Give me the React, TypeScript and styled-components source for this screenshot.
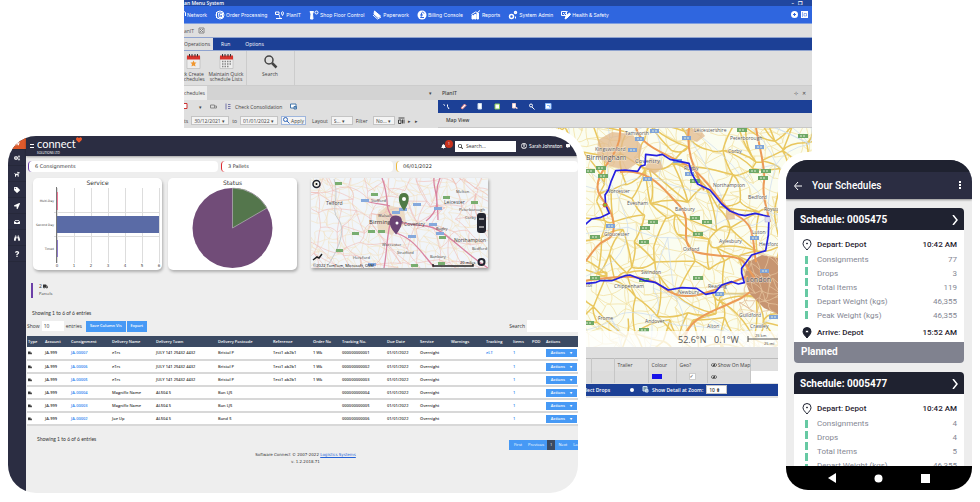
import React from "react";
import styled, { createGlobalStyle } from "styled-components";
import {
  FaHome, FaCogs, FaDog, FaTag, FaLocationArrow, FaInbox, FaBinoculars, FaQuestion, FaTruck,
  FaSearch, FaBell, FaRegUserCircle, FaCommentAlt, FaHeart, FaSignOutAlt, FaRegEye,
} from "react-icons/fa";

const Global = createGlobalStyle`
  *, *::before, *::after { box-sizing: border-box; }
  html, body { margin: 0; background: #fff; }
  button, input, select { font: inherit; color: inherit; margin: 0; padding: 0; border: 0; border-radius: 0; background: none; }
  select { appearance: none; }
  a { color: inherit; text-decoration: none; }
  svg { display: block; flex: none; }
  h1, h2, p, ul, dl, dd { margin: 0; padding: 0; }
`;

const Stage = styled.main`
  position: relative;
  min-height: 100vh;
  overflow: hidden;
  background: #fff;
  white-space: nowrap;
`;

/* ---------- planning desktop ---------- */

const Desktop = styled.section`
  position: absolute;
  top: 0;
  left: 184px;
  right: 168px;
  background: #dfdfdf;
  color: #444;
  font: 5px/8px "Open Sans", sans-serif;
  overflow: hidden;
`;
const TitleBar = styled.header`
  display: flex;
  align-items: center;
  justify-content: space-between;
  height: 6px;
  padding-right: 10px;
  background: #21479f;
  color: #fff;
  font-weight: 600;
  line-height: 4px;
  h1 { font: inherit; line-height: 4px; }
`;
const MainNav = styled.nav`
  display: flex;
  align-items: center;
  gap: 8px;
  height: 18px;
  padding-right: 4px;
  background: #2f66df;
  border-bottom: 1px solid #7f9fe0;
  color: #fff;
  font: 5px/8px Inter, sans-serif;
`;
const NavLink = styled.a`
  display: flex;
  align-items: center;
  gap: 1px;
`;
const NavEnd = styled.span`
  display: flex;
  gap: 3px;
  margin-left: auto;
`;
const DocTabs = styled.div`
  display: flex;
  align-items: center;
  gap: 4px;
  height: 13px;
  color: #555;
`;
const RibbonTabs = styled.div`
  display: flex;
  height: 14px;
  background: #1c4096;
  border: 1px solid #8fa3cf;
  border-width: 1px 0;
`;
const RibbonTab = styled.button<{ $active?: boolean }>`
  padding: 0 ${(p) => (p.$active ? 3 : 7)}px 0 ${(p) => (p.$active ? 0 : 8)}px;
  background: ${(p) => (p.$active ? "#dfdfdf" : "transparent")};
  color: ${(p) => (p.$active ? "#444" : "#fff")};
`;
const Ribbon = styled.div`
  display: flex;
  height: 35px;
  border-bottom: 1px solid #ccc;
`;
const RibbonGroup = styled.div`
  display: flex;
  gap: 5px;
  padding: 3px 1px 0 0;
  border-right: 1px solid #ccc;
`;
const RibbonButton = styled.button<{ $w: number }>`
  display: flex;
  flex-direction: column;
  align-items: center;
  gap: 3px;
  width: ${(p) => p.$w}px;
  line-height: 5px;
  white-space: pre;
`;
const Panes = styled.div`
  display: grid;
  grid-template-columns: minmax(0, 254fr) minmax(0, 374fr);
`;
const Pane = styled.div`
  min-width: 0;
`;
const PaneHead = styled.div`
  display: flex;
  align-items: center;
  justify-content: space-between;
  height: 14px;
  padding: 0 6px 0 0;
  background: #d3d3d3;
  color: #444;
`;
const PaneTab = styled.button<{ $plain?: boolean }>`
  height: 14px;
  padding: 0 2px 0 ${(p) => (p.$plain ? 4 : 0)}px;
  background: ${(p) => (p.$plain ? "transparent" : "#ececec")};
  font-weight: ${(p) => (p.$plain ? 600 : 400)};
`;
const Tools = styled.div<{ $blue?: boolean }>`
  display: flex;
  align-items: center;
  gap: ${(p) => (p.$blue ? 10 : 8)}px;
  height: 13px;
  padding-left: ${(p) => (p.$blue ? 5 : 0)}px;
  background: ${(p) => (p.$blue ? "#1c4096" : "#dfdfdf")};
  button { display: flex; align-items: center; gap: 3px; }
`;
const Filters = styled.form`
  display: flex;
  align-items: center;
  gap: 3px;
  height: 15px;
  label { display: flex; align-items: center; gap: 3px; }
`;
const Box = styled.input<{ $w: number }>`
  width: ${(p) => p.$w}px;
  height: 9px;
  padding: 0 2px;
  border: 1px solid #c4c4c4;
  background: #f4f4f4;
`;
const Pick = styled.select`
  width: 22px;
  height: 9px;
  padding: 0 2px;
  border: 1px solid #c4c4c4;
  background: #f4f4f4;
`;
const Apply = styled.button`
  display: flex;
  align-items: center;
  gap: 1px;
  height: 9px;
  margin-right: 3px;
  padding: 0 1px;
  border: 1px solid #9fb6dc;
  background: #f4f4f4;
`;
const MapTitle = styled.h2`
  height: 15px;
  padding-left: 8px;
  border-bottom: 1px solid #c8c8c8;
  font: 600 5px/15px "Open Sans", sans-serif;
`;
const MapDrawing = styled.svg`
  width: 100%;
  height: auto;
`;
const DropTable = styled.table`
  width: 100%;
  margin-top: 11px;
  border-collapse: collapse;
  table-layout: fixed;
  border-top: 1px solid #bbb;
  th, td { height: 12px; padding: 0 3px; border-right: 1px solid #c6c6c6; font-weight: 400; text-align: left; }
  td { background: #dcdcdc; }
  td:last-child { background: #fff; }
  svg { display: inline-block; vertical-align: middle; }
`;
const Col = styled.col<{ $w: number }>`
  width: ${(p) => p.$w}px;
`;
const Swatch = styled.span`
  display: block;
  width: 10px;
  height: 5px;
  background: #1712e8;
`;
const Tick = styled.input`
  appearance: none;
  display: block;
  width: 7px;
  height: 7px;
  margin-left: 9px;
  background: #fff;
  border: 1px solid #ccc;
  &:checked::after { content: "✓"; display: block; font: 5px/5px "DejaVu Sans", sans-serif; }
`;
const ZoomBar = styled.div`
  display: flex;
  align-items: center;
  gap: 3px;
  height: 12px;
  margin: 1px 0 2px;
  padding-left: 142px;
  background: #1c4096;
  color: #fff;
  font-weight: 600;
  label { display: flex; align-items: center; gap: 3px; }
  input { color: #444; background: #fff; }
`;

const ROADS_SEED = 7;
function roadWeb(x0: number, y0: number, w: number, h: number, step: number, seed: number) {
  let s = seed;
  const rnd = () => (s = (s * 16807) % 2147483647) / 2147483647;
  const cols = Math.ceil(w / step) + 2;
  const rows = Math.ceil(h / step) + 2;
  const at: number[][][] = [];
  for (let r = 0; r < rows; r++) {
    at.push([]);
    for (let c = 0; c < cols; c++)
      at[r].push([x0 + (c - 0.5 + (rnd() - 0.5) * 1.1) * step, y0 + (r - 0.5 + (rnd() - 0.5) * 1.1) * step]);
  }
  let d = "";
  const link = (a: number[], b: number[]) => {
    const mx = (a[0] + b[0]) / 2 + (rnd() - 0.5) * step * 0.6;
    const my = (a[1] + b[1]) / 2 + (rnd() - 0.5) * step * 0.6;
    d += `M${a[0].toFixed(1)} ${a[1].toFixed(1)}Q${mx.toFixed(1)} ${my.toFixed(1)} ${b[0].toFixed(1)} ${b[1].toFixed(1)}`;
  };
  for (let r = 0; r < rows; r++)
    for (let c = 0; c < cols; c++) {
      if (c + 1 < cols && rnd() > 0.15) link(at[r][c], at[r][c + 1]);
      if (r + 1 < rows && rnd() > 0.15) link(at[r][c], at[r + 1][c]);
      if (r + 1 < rows && c + 1 < cols && rnd() > 0.65) link(at[r][c], at[r + 1][c + 1]);
    }
  return d;
}

type Place = [number, number, string, number?];
const TOWNS: Place[] = [
  [586, 160, "Birmingham", 7], [635, 163, "Coventry", 6], [625, 135, "Tamworth"], [694, 132, "Leicestershire"],
  [730, 140, "Peterborough"], [728, 153, "Corby"], [595, 151, "Kingswinford"], [684, 170, "Rugby"],
  [606, 193, "Worcester"], [713, 187, "Northampton"], [748, 199, "Bedford"], [627, 205, "Evesham"],
  [675, 211, "Banbury"], [764, 211, "Royston"], [604, 236, "Gloucester"], [752, 234, "Luton"],
  [719, 243, "Aylesbury"], [683, 251, "Oxford"], [759, 246, "Hertford"], [641, 274, "Swindon"],
  [614, 288, "Chippenham"], [586, 287, "tol"], [708, 288, "Reading"], [746, 282, "London", 7],
  [678, 294, "Newbury"], [739, 317, "Guildford"], [645, 323, "Andover"], [598, 320, "Frome"],
  [707, 328, "Alton"], [750, 328, "Crawley"],
];
const GREEN_TAGS: [number, number][] = [
  [601, 168], [603, 176], [590, 171], [754, 171], [766, 171], [763, 178], [695, 181], [695, 218], [707, 222],
  [653, 222], [645, 228], [595, 237], [644, 242], [698, 234], [742, 130], [803, 136], [595, 278], [698, 278],
  [644, 280], [589, 323], [644, 330],
];
const BLUE_TAGS: [number, number][] = [
  [655, 131], [640, 139], [633, 150], [687, 138], [760, 147], [678, 161], [648, 179], [690, 174], [611, 226],
  [765, 271], [720, 294], [774, 317], [755, 238],
];

function RouteMap() {
  return (
    <MapDrawing viewBox="438 128 374 219" role="img" aria-label="Route map" fontFamily="Open Sans, sans-serif">
      <rect x="438" y="128" width="374" height="219" fill="#fbfdf0" />
      <g fill="none">
        <path d={roadWeb(540, 120, 280, 230, 11, 91)} stroke="#f3e2a6" strokeWidth="0.8" />
        <path d={roadWeb(540, 120, 280, 230, 22, ROADS_SEED)} stroke="#e9c75f" strokeWidth="1.5" />
        <path d={roadWeb(540, 120, 280, 230, 45, 23)} stroke="#cbdbee" strokeWidth="0.7" />
      </g>
      <g fill="#e2b98c" opacity="0.75">
        <path d="M598 140l14-8 20 2 10 12-3 16-12 8-18-4-12-10z" />
        <path d="M650 158l10 2 3 8-9 6-9-6z" />
        <path d="M686 130l13-2 6 8-8 6-10-4z" />
        <path d="M726 208l8 2 1 9-9 1z" />
      </g>
      <path d="M748 262l14-7 16 3 34 6v50l-26 4-22-10-14-14-6-16z" fill="#c79571" />
      <path d={roadWeb(748, 262, 60, 44, 8, 55)} fill="none" stroke="#e3c19c" strokeWidth="0.8" />
      <g fill="none" stroke="#ec9b58" strokeWidth="2">
        <path d="M560 290C590 262 592 246 606 240S612 212 606 204 594 190 600 176 622 150 620 128" />
        <path d="M620 172C650 168 664 190 676 202S686 218 686 236 700 254 724 256 742 262 756 280" />
        <path d="M756 128C760 150 766 170 764 182S766 206 770 222" />
        <path d="M636 128C642 150 676 156 694 170S720 206 738 216 752 240 756 262" />
        <path d="M684 340C688 320 706 314 724 306S742 298 750 292" />
        <path d="M560 284C600 280 640 268 664 288S720 286 748 276" />
        <path d="M689 128C686 150 692 164 704 190" />
      </g>
      <g fill="#6fa866">
        {GREEN_TAGS.map(([x, y]) => <rect key={`${x}-${y}`} x={x - 5} y={y - 2} width="10" height="4" />)}
      </g>
      <g fill="#7fa4da">
        {BLUE_TAGS.map(([x, y]) => <rect key={`${x}-${y}`} x={x - 5} y={y - 2} width="9" height="4" />)}
      </g>
      <g stroke="#e5efd9" strokeDasharray="2 1">
        {[...GREEN_TAGS, ...BLUE_TAGS].map(([x, y]) => <path key={`${x}-${y}`} d={`M${x - 3} ${y}h6`} />)}
      </g>
      <g fill="#555" stroke="#fff" strokeWidth="1" strokeOpacity="0.6" paintOrder="stroke">
        {TOWNS.map(([x, y, name, size]) => <text key={name} x={x} y={y} fontSize={size ?? 5}>{name}</text>)}
      </g>
      <g transform="translate(575 120) scale(.33333)" fill="none" stroke="#2520e0" strokeWidth="5" strokeLinejoin="round">
        <path d="M0 330L33 312 50 297 75 293 103 280 92 255 90 225 100 210 108 185 122 152 150 150 188 154 198 138 210 135 212 103 245 107 262 103 285 118 342 130 350 160 368 192 405 210 440 252 465 273 490 283 510 287 540 280 582 290 580 345 572 392 530 405 500 445 500 460 508 488 490 492 470 485 440 495 420 517 392 523 365 505 320 503 280 510 240 487 210 482 165 465 150 467 110 482 75 482 60 488 0 493" />
      </g>
      <circle cx="605" cy="205" r="2" fill="#7ac52b" stroke="#e2562b" />
      <rect x="765" y="217" width="5" height="5" fill="#dcdcf2" stroke="#aaaad0" strokeWidth="0.5" />
      <rect x="438" y="331" width="374" height="16" fill="#fff" opacity="0.75" />
      <text x="678" y="343" fontSize="9" fill="#555">52.6°N</text>
      <text x="714" y="343" fontSize="9" fill="#555">0.1°W</text>
      <path d="M748 336v6M748 339h50" stroke="#555" fill="none" />
      <text x="755" y="337" fontSize="4" fill="#444">25 km</text>
      <text x="764" y="345" fontSize="4" fill="#444">25 mi</text>
    </MapDrawing>
  );
}

const Line = ({ d, children }: { d?: string; children?: React.ReactNode }) => (
  <svg width="10" height="10" viewBox="0 0 20 20" fill="none" stroke="#fff" strokeWidth="2">
    {d && <path d={d} />}
    {children}
  </svg>
);
const OrderIcon = () => <Line><circle cx="10" cy="10" r="8" /><path d="M3 4v12M7 6h8v9H8zM10 9h4M10 12h3" /></Line>;
const PinRouteIcon = () => <Line d="M1 4h7v5H1zM2 17h12M5 9c8 0 0 8 9 8M15 11c-7-10 7-10 0 0z" />;
const ShopIcon = () => <Line><path d="M2 3h7l-2 5 1 10H3l1-10z" fill="#fff" /><circle cx="15" cy="5" r="3" /></Line>;
const PaperIcon = () => <Line><path d="M5 2l12 10-5 3L4 8z" fill="#fff" /><path d="M2 10l9 8 7-4" /></Line>;
const PoundIcon = () => (
  <svg width="10" height="10" viewBox="0 0 20 20"><circle cx="10" cy="10" r="9" fill="#fff" /><path d="M14 7c-1-4-6-3-5 1v3c0 2-1 3-2 4h7M6 10h6" fill="none" stroke="#2f66df" strokeWidth="2" /></svg>
);
const ReportIcon = () => <Line><path d="M2 18V11h3v7zM7 18V9h3v9zM12 18V6h3v12z" fill="#fff" /><path d="M1 9L9 4l4 1 5-4" /></Line>;
const GearIcon = () => <Line><circle cx="7" cy="13" r="4" strokeWidth="3" /><circle cx="15" cy="5" r="2" strokeWidth="3" /><path d="M15 13v4" /></Line>;
const PencilIcon = () => <Line><path d="M1 3h10v8H1zM4 6l3 3 6-7" /><path d="M8 18l2-6 7-6 2 3-7 7z" fill="#fff" /></Line>;

const NAV: [string, React.ReactNode][] = [
  ["Order Processing", <OrderIcon key="i" />], ["PlanIT", <PinRouteIcon key="i" />],
  ["Shop Floor Control", <ShopIcon key="i" />], ["Paperwork", <PaperIcon key="i" />],
  ["Billing Console", <PoundIcon key="i" />], ["Reports", <ReportIcon key="i" />],
  ["System Admin", <GearIcon key="i" />], ["Health & Safety", <PencilIcon key="i" />],
];

const Calendar = ({ star }: { star?: boolean }) => (
  <svg width="15" height="15" viewBox="0 0 30 30">
    <path d="M2 5h26v24H2z" fill="#ededed" stroke="#aaa" />
    <path d="M2 3h26v8H2z" fill="#d8342c" />
    <path d="M7 0v5M12 0v5M18 0v5M23 0v5" stroke="#333" strokeWidth="2" />
    {star
      ? <path d="M15 13l2 4 4 0-3 3 1 5-4-2-4 2 1-5-3-3 4 0z" fill="#f0962e" />
      : <path d="M6 15h19M6 20h19M6 25h14" stroke="#888" strokeWidth="3" strokeDasharray="3 2" />}
  </svg>
);

const ToolIcon = ({ d, color = "#fff", fill = "none" }: { d: string; color?: string; fill?: string }) => (
  <svg width="7" height="7" viewBox="0 0 14 14" fill={fill} stroke={color} strokeWidth="2"><path d={d} /></svg>
);

function PlannerWindow() {
  return (
    <Desktop>
      <TitleBar><h1>an Menu System</h1><span>– &nbsp; ❐</span></TitleBar>
      <MainNav>
        <NavLink href="#network"><svg width="2" height="7" viewBox="0 0 4 14"><path d="M0 1l3 2v7" fill="none" stroke="#fff" strokeWidth="2" /></svg>Network</NavLink>
        {NAV.map(([label, icon]) => <NavLink key={label} href="#nav">{icon}{label}</NavLink>)}
        <NavEnd>
          <svg width="7" height="7" viewBox="0 0 14 14"><circle cx="7" cy="7" r="7" fill="#fff" /><path d="M7 4v6M4 7h6" stroke="#2f66df" strokeWidth="2" /></svg>
          <svg width="7" height="7" viewBox="0 0 14 14"><path d="M0 0h14v14H0z" fill="#fff" /><path d="M3 2v10M6 5h5v5H6z" stroke="#2f66df" fill="none" /></svg>
        </NavEnd>
      </MainNav>
      <DocTabs><span>anIT</span><ToolIcon color="#888" d="M2 2h10v10H2zM4 4l6 6M10 4l-6 6" /></DocTabs>
      <RibbonTabs>
        <RibbonTab $active>Operations</RibbonTab><RibbonTab>Run</RibbonTab><RibbonTab>Options</RibbonTab>
      </RibbonTabs>
      <Ribbon>
        <RibbonGroup>
          <RibbonButton $w={18}><Calendar star />{"ck Create\nschedules"}</RibbonButton>
          <RibbonButton $w={38}><Calendar />{"Maintain Quick\nschedule Lists"}</RibbonButton>
        </RibbonGroup>
        <RibbonGroup>
          <RibbonButton $w={46}>
            <svg width="15" height="15" viewBox="0 0 30 30" fill="none" stroke="#444"><circle cx="12" cy="12" r="8" strokeWidth="3" /><path d="M18 18l9 9" strokeWidth="5" /></svg>
            Search
          </RibbonButton>
        </RibbonGroup>
      </Ribbon>
      <Panes>
        <Pane>
          <PaneHead><PaneTab>chedules</PaneTab><span>▾</span></PaneHead>
          <Tools>
            <ToolIcon color="#c33" fill="#fff" d="M0 1h6v10H0" />
            <span>▾</span>
            <ToolIcon color="#888" d="M1 4h8v6H1zM9 6h4v4H9" />
            <button><ToolIcon color="#77a" d="M2 1v12M6 3h5M6 7h5M6 11h5" />Check Consolidation</button>
            <ToolIcon color="#47a" fill="#fff" d="M1 2h11v8H1zM8 7h5v5H8z" />
          </Tools>
          <Filters onSubmit={(e) => e.preventDefault()}>
            <label>ts<Box $w={38} defaultValue="30/12/2021 ▾" /></label>
            <label>to<Box $w={38} defaultValue="01/01/2022 ▾" /></label>
            <Apply type="submit"><ToolIcon color="#3368bb" d="M9 5a4 4 0 1 0-8 0 4 4 0 1 0 8 0zM8 8l5 5" />Apply</Apply>
            <label>Layout<Pick><option>S... ▾</option></Pick></label>
            <label>Filter &nbsp;<Pick><option>No... ▾</option></Pick></label>
            <ToolIcon color="#444" d="M1 2h12M1 6h5v7H1zM9 5v8M12 5v8" />
            <span>▸ &nbsp; ▸</span>
          </Filters>
        </Pane>
        <Pane>
          <PaneHead><PaneTab $plain>PlanIT</PaneTab><span>⊹ &nbsp; ✕</span></PaneHead>
          <Tools $blue>
            <ToolIcon d="M1 3l3 2M9 3v4l3 5" />
            <ToolIcon color="#e88" fill="#fff" d="M2 10l7-8 3 3-7 7z" />
            <ToolIcon color="#cde" fill="#fff" d="M2 1h7v11H2z" />
            <ToolIcon color="#8c5" fill="#fff" d="M2 2h9v10H2z" />
            <ToolIcon color="#ecc" fill="#fff" d="M3 1h6v9H3zM9 9h3v3" />
            <ToolIcon d="M9 5a3 3 0 1 0-6 0 3 3 0 1 0 6 0zM8 8l5 5" />
            <ToolIcon color="#8bf" fill="#fff" d="M1 1h11v11H1zM4 5h5v4" />
          </Tools>
          <MapTitle>Map View</MapTitle>
          <RouteMap />
          <DropTable>
            <colgroup>{[153, 23, 34, 28, 31, 43, 62].map((w, i) => <Col key={i} $w={w} />)}</colgroup>
            <thead><tr><th /><th /><th>Trailer</th><th>Colour</th><th>Geo?</th><th><FaRegEye size={6} /> Show On Map</th><th /></tr></thead>
            <tbody><tr><td align="right">CT</td><td /><td /><td><Swatch /></td><td><Tick type="checkbox" defaultChecked aria-label="Geo" /></td><td align="center"><FaRegEye size={6} /></td><td /></tr></tbody>
          </DropTable>
          <ZoomBar>
            <span>Select Drops</span>
            <svg width="26" height="8" viewBox="0 0 26 8"><circle cx="19" cy="4" r="2" fill="#fff" /></svg>
            <ToolIcon color="#cde" fill="#79a" d="M2 1h8v9H2zM7 7h5v5H7z" />
            <label>Show Detail at Zoom:<Box $w={21} defaultValue="10 ⬍" /></label>
          </ZoomBar>
        </Pane>
      </Panes>
    </Desktop>
  );
}

/* ---------- consignment portal ---------- */

const Portal = styled.section`
  position: absolute;
  top: 136px;
  bottom: 9px;
  left: 8px;
  right: 402px;
  display: grid;
  grid-template-columns: 18px minmax(0, 1fr);
  border-radius: 28px;
  overflow: hidden;
  background: #eee;
  color: #333;
  font: 5px/8px "Open Sans", sans-serif;
  box-shadow: 0 0 0 8px #fff;
`;
const Rail = styled.nav`
  display: flex;
  flex-direction: column;
  background: #2b2d42;
  color: #fff;
`;
const RailLink = styled.a<{ $home?: boolean }>`
  display: grid;
  place-items: center;
  height: ${(p) => (p.$home ? 14 : 16)}px;
  background: ${(p) => (p.$home ? "#dd5a2b" : "transparent")};
  border-bottom: 1px solid #26283a;
`;
const PortalMain = styled.div`
  min-width: 0;
  padding-left: 1px;
`;
const PortalHead = styled.header`
  display: flex;
  align-items: center;
  gap: 3px;
  height: 20px;
  margin-left: -1px;
  padding: 0 1px 0 4px;
  background: #2b2d42;
  color: #fff;
  box-shadow: 0 1px 2px #0005;
`;
const Brand = styled.a`
  display: flex;
  align-items: flex-start;
  margin-right: auto;
  font: 11px/14px Lato, sans-serif;
  span { display: flex; flex-direction: column; }
  small { font: 3px/4px Lato, sans-serif; }
`;
const Alert = styled.button`
  position: relative;
  padding-right: 6px;
  i {
    position: absolute;
    top: -4px;
    left: 4px;
    width: 8px;
    height: 8px;
    border-radius: 50%;
    background: #c7301c;
    font: 4px/8px "Open Sans", sans-serif;
  }
`;
const SearchBox = styled.label`
  display: flex;
  align-items: center;
  gap: 3px;
  width: 61px;
  height: 11px;
  margin-right: 2px;
  padding: 0 3px;
  background: #fff;
  color: #333;
  input { width: 40px; }
`;
const User = styled.a`
  display: flex;
  align-items: center;
  gap: 2px;
  width: 42px;
  font: 5px/8px Lato, sans-serif;
`;
const Stats = styled.div`
  display: grid;
  grid-template-columns: 192fr 174fr 184fr;
  gap: 3px;
  padding: 5px 0 0 1px;
`;
const Stat = styled.div<{ $c: string }>`
  height: 11px;
  padding-left: 6px;
  border-left: 1px solid ${(p) => p.$c};
  border-radius: 4px;
  background: #fff;
  font: 5px/11px "DejaVu Sans", sans-serif;
`;
const Charts = styled.div`
  display: flex;
  gap: 6px;
  padding: 6px 0 0 6px;
`;
const ChartCard = styled.div`
  flex: 0 1 129px;
  height: 92px;
  background: #fff;
  border-radius: 5px;
  box-shadow: 1px 2px 3px #0004;
  text-align: center;
  h2 { height: 9px; font: 6px/9px "DejaVu Sans", sans-serif; }
`;
const MapCard = styled.div`
  flex: 0 1 177px;
  height: 90px;
  margin-left: 8px;
  box-shadow: 1px 2px 3px #0005;
`;
const Fleet = styled.div`
  height: 15px;
  margin: 13px 0 11px 4px;
  padding-left: 6px;
  border-left: 2px solid #6c3fa8;
  font-size: 4px;
  line-height: 7px;
  span { display: flex; align-items: center; gap: 1px; font-size: 5px; }
`;
const Showing = styled.p`
  padding-left: 5px;
  font: 5px/8px Lato, sans-serif;
`;
const Controls = styled.div`
  display: flex;
  align-items: center;
  height: 12px;
  margin: 3px 0 4px;
  label { display: flex; align-items: center; gap: 2px; }
`;
const Entry = styled.select`
  width: 22px;
  height: 10px;
  padding-left: 2px;
  background: #fff;
`;
const Blue = styled.button<{ $w?: number }>`
  width: ${(p) => (p.$w ? `${p.$w}px` : "100%")};
  height: ${(p) => (p.$w ? 11 : 8)}px;
  margin-right: ${(p) => (p.$w ? 1 : 0)}px;
  background: #4699f5;
  color: #fff;
  font-size: 4px;
  font-weight: 600;
  text-align: center;
`;
const FindLabel = styled.label`
  margin-left: auto;
  input { width: 51px; height: 12px; background: #fff; }
`;
const Grid = styled.table`
  width: 100%;
  table-layout: fixed;
  border-collapse: collapse;
  font-size: 4px;
  line-height: 6px;
  th, td { padding: 0 1px; text-align: left; white-space: nowrap; }
  th { height: 11px; background: #3b4a63; color: #fff; font-weight: 600; }
  td { height: 13px; background: #fff; border-bottom: 2px solid #d8d8d8; font-weight: 600; }
  td a { color: #2a82f0; }
`;
const After = styled.div`
  display: flex;
  align-items: flex-start;
  justify-content: space-between;
  padding: 9px 0 0 5px;
  line-height: 5px;
`;
const Pager = styled.nav`
  display: flex;
  align-items: center;
  width: 69px;
  height: 10px;
  margin-top: 5px;
  padding-left: 2px;
  background: #4699f5;
  color: #fff;
  font-size: 4px;
  overflow: hidden;
`;
const PageLink = styled.a<{ $on?: boolean }>`
  padding: 0 3px;
  line-height: 10px;
  background: ${(p) => (p.$on ? "#3b4a63" : "transparent")};
`;
const Foot = styled.footer`
  padding: 1px 0 0 6px;
  font: 4px/7px "DejaVu Sans", sans-serif;
  text-align: center;
  a { color: #2463d8; text-decoration: underline; }
`;

const HEADS = ["Type", "Account", "Consignment", "Delivery Name", "Delivery Town", "Delivery Postcode", "Reference", "Order No", "Tracking No.", "Due Date", "Service", "Warnings", "Tracking", "Items", "POD", "Actions"];
const WIDTHS = [17, 26, 41, 44, 62, 55, 40, 29, 45, 33, 31, 35, 27, 19, 14, 33];
const ROWS = [
  ["JA-999", "JA-00007", "eTrs", "JULY 141 25432 4432", "Bristol P", "Test1 ab2b1", "1 Wk", "000000000001", "eLT"],
  ["JA-999", "JA-00006", "eTrs", "JULY 141 25432 4432", "Bristol P", "Test1 ab2b1", "1 Wk", "000000000002", ""],
  ["JA-999", "JA-00005", "eTrs", "JULY 141 25432 4432", "Bristol P", "Test1 ab2b1", "1 Wk", "000000000003", ""],
  ["JA-999", "JA-00004", "Magnific Name", "AL504 S", "Bon LJ5", "", "", "000000000004", ""],
  ["JA-999", "JA-00003", "Magnific Name", "AL504 S", "Bon LJ5", "", "", "000000000005", ""],
  ["JA-999", "JA-00002", "Joe Up", "AL504 S", "Bond 5", "", "", "000000000006", ""],
];

const BAR_LABELS: [number, string][] = [[201, "Multi-Day"], [225, "Second Day"], [249, "Timed"]];
const TICKS = [57, 74, 91, 108, 125, 142, 159];

function ServiceChart() {
  return (
    <svg width="100%" height="83" viewBox="33 187 129 83" fontFamily="DejaVu Sans, sans-serif" fontSize="4" fill="#444">
      <g stroke="#ddd">{TICKS.map((x) => <path key={x} d={`M${x}.5 188v75`} />)}<path d="M54 212.500h106M54 236.500h106" /></g>
      <path d="M56.500 187v76" stroke="#777" />
      <rect x="57" y="192" width="1" height="18" fill="#ee7795" />
      <rect x="57" y="216" width="102" height="17" fill="#5a6ba6" />
      <rect x="57" y="240" width="1" height="17" fill="#8d78cc" />
      {BAR_LABELS.map(([y, t]) => <text key={t} x="54" y={y + 1} textAnchor="end" fontSize="3">{t}</text>)}
      {TICKS.map((x, i) => <text key={x} x={x} y="267" textAnchor="middle">{i}</text>)}
    </svg>
  );
}

function StatusChart() {
  return (
    <svg width="100%" height="83" viewBox="168 187 129 83" role="img" aria-label="Status pie">
      <circle cx="232.500" cy="228" r="40" fill="#714c78" />
      <path d="M232.500 228V188A40 40 0 0 1 267 208z" fill="#54764c" stroke="#b9b3bb" strokeWidth="0.7" />
    </svg>
  );
}

const CITY: Place[] = [
  [369, 223, "Birmingham", 6], [404, 225, "Coventry"], [371, 201, "Stafford", 4], [326, 204, "Telford"], [444, 203, "Leicester"],
  [456, 192, "Melton", 4], [459, 210, "Peterborough", 4], [454, 241, "Northampton"], [382, 245, "Worcester", 4],
  [397, 253, "Stratford", 4], [353, 258, "Hereford", 4], [430, 257, "Banbury", 4], [436, 229, "Rugby", 4], [378, 216, "Walsall", 4],
  [465, 218, "Corby", 4], [472, 249, "Bedford", 4],
];
function CityMap() {
  return (
    <svg width="100%" height="90" viewBox="311 177 177 90" preserveAspectRatio="xMidYMid slice" fontFamily="Open Sans, sans-serif" role="img" aria-label="Live map">
      <rect x="300" y="170" width="200" height="100" fill="#f1f5f9" />
      <path d="M376 214l12-10 16 4 2 14-14 12-14-4z" fill="#eadbc8" />
      <g fill="none">
        <path d={roadWeb(311, 177, 180, 90, 8, 31)} stroke="#f3dfbb" strokeWidth="0.5" />
        <path d={roadWeb(311, 177, 180, 90, 15, 17)} stroke="#f0bcb5" strokeWidth="0.6" />
        <path d="M334 178c6 20-4 30 4 40s2 28-10 46" stroke="#c8ccd0" />
        <path d="M382 177c8 20 2 30 10 38s16 8 34 10 34 24 62 42M392 215c-6 20-4 30-8 52M362 199c12 4 22 4 28 6M396 232c18 6 24 18 38 34M426 220c20-16 6-30 8-43M440 177c-6 14-2 26-2 42" stroke="#d985a1" strokeWidth="1.300" />
      </g>
      <g fill="#79ad70">
        {[[335, 181], [371, 192], [352, 231], [368, 229], [378, 229], [336, 248], [443, 195], [471, 200], [411, 263], [439, 235], [438, 261]].map(([x, y]) => <rect key={x} x={x} y={y} width="7" height="3" />)}
      </g>
      <g fill="#86a9dc">
        {[[361, 198], [392, 210], [413, 202], [434, 206], [429, 222], [408, 234], [368, 262], [399, 207], [436, 231]].map(([x, y]) => <rect key={x} x={x} y={y} width="8" height="3" />)}
      </g>
      <g fill="#444">{CITY.map(([x, y, t, s]) => <text key={t} x={x} y={y} fontSize={s ?? 5}>{t}</text>)}</g>
      <path d="M404 208c-6-8-5-15 0-15s5 7 0 15z" fill="#4f7a45" stroke="#4f7a45" strokeWidth="2" /><circle cx="404" cy="198" r="2" fill="#fff" />
      <path d="M396 231c-7-8-6-15 0-15s6 7 0 15z" fill="#6a4474" stroke="#6a4474" strokeWidth="3" /><circle cx="397" cy="222" r="1.500" fill="#fff" />
      <g fill="none" stroke="#22242f"><circle cx="316.500" cy="183" r="3.500" strokeWidth="1.500" /><circle cx="481.500" cy="261" r="3" strokeWidth="2" /></g>
      <circle cx="316.500" cy="183" r="1" />
      <rect x="477" y="212" width="9" height="20" rx="3" fill="#22242f" /><path d="M479 218h5M479 226h5" stroke="#fff" />
      <path d="M433 263v2h40v-2M313 259l4-3 2 1 3-4" stroke="#222" fill="none" strokeWidth="1.500" />
      <text x="313" y="266" fontSize="4">©2022 TomTom, Microsoft, OSM</text><text x="460" y="263" fontSize="4">20 miles</text>
    </svg>
  );
}

function PortalWindow() {
  const rail = [FaHome, FaCogs, FaDog, FaTag, FaLocationArrow, FaInbox, FaBinoculars, FaQuestion];
  return (
    <Portal>
      <Rail>{rail.map((Icon, i) => <RailLink key={i} href="#menu" $home={i === 0}><Icon size={6} /></RailLink>)}</Rail>
      <PortalMain>
        <PortalHead>
          <svg width="4" height="6" viewBox="0 0 4 6"><path d="M0 1.500h4M0 4.500h4" stroke="#fff" /></svg>
          <Brand href="#home"><span>connect<small>SOLUTIONS LTD</small></span><FaHeart size={6} color="#ef5a2b" /></Brand>
          <Alert aria-label="Notifications"><FaBell size={5} /><i>1</i></Alert>
          <SearchBox><FaSearch size={5} /><input defaultValue="Search..." /></SearchBox>
          <User href="#user"><FaRegUserCircle size={6} />Sarah Johnston</User>
          <FaCommentAlt size={4} /><FaSignOutAlt size={4} />
        </PortalHead>
        <Stats><Stat $c="#6c3fa8">6 Consignments</Stat><Stat $c="#e0282e">3 Pallets</Stat><Stat $c="#edb93b">06/01/2022</Stat></Stats>
        <Charts>
          <ChartCard><h2>Service</h2><ServiceChart /></ChartCard>
          <ChartCard><h2>Status</h2><StatusChart /></ChartCard>
          <MapCard><CityMap /></MapCard>
        </Charts>
        <Fleet><span>2 <FaTruck size={5} /></span>Parcels</Fleet>
        <Showing>Showing 1 to 6 of 6 entries</Showing>
        <Controls>
          <label>Show<Entry><option>10</option></Entry>entries</label>
          <svg width="4" height="8" />
          <Blue $w={40}>Save Column Vis</Blue><Blue $w={20}>Export</Blue>
          <FindLabel>Search<input /></FindLabel>
        </Controls>
        <Grid>
          <colgroup>{WIDTHS.map((w, i) => <Col key={i} $w={w} />)}</colgroup>
          <thead><tr>{HEADS.map((h) => <th key={h}>{h}</th>)}</tr></thead>
          <tbody>
            {ROWS.map(([acc, con, name, town, post, ref, order, track, eta]) => (
              <tr key={con}>
                <td><FaTruck size={4} /></td><td>{acc}</td><td><a href="#c">{con}</a></td><td>{name}</td><td>{town}</td><td>{post}</td>
                <td>{ref}</td><td>{order}</td><td>{track}</td><td>01/01/2022</td><td>Overnight</td><td /><td><a href="#t">{eta}</a></td>
                <td><a href="#i">1</a></td><td /><td><Blue>Actions &nbsp; &nbsp; ▾</Blue></td>
              </tr>
            ))}
          </tbody>
        </Grid>
        <After>
          <Showing as="span">Showing 1 to 6 of 6 entries</Showing>
          <Pager><PageLink href="#f">First</PageLink><PageLink href="#p">Previous</PageLink><PageLink $on href="#1">1</PageLink><PageLink href="#n">Next</PageLink><PageLink href="#l">Last</PageLink></Pager>
        </After>
        <Foot>Software Connect © 2007-2022 <a href="#l">Logistics Systems</a><br />v. 1.2.2018.71</Foot>
      </PortalMain>
    </Portal>
  );
}

/* ---------- driver phone ---------- */

const Phone = styled.section`
  position: absolute;
  top: 160px;
  bottom: 12px;
  right: 8px;
  width: 186px;
  display: flex;
  flex-direction: column;
  border-radius: 22px;
  overflow: hidden;
  background: #ededed;
  color: #1f2230;
  font: 8px/14px Roboto, sans-serif;
  box-shadow: 0 0 0 8px #fff;
`;
const AppBar = styled.header`
  display: flex;
  align-items: center;
  gap: 10px;
  height: 39px;
  flex: none;
  padding: 0 8px;
  border-top: 12px solid #1f2230;
  background: #2b2d42;
  color: #fff;
  box-shadow: 0 1px 2px #0006;
  h1 { flex: 1; font: 500 10px/14px Roboto, sans-serif; }
  button { display: flex; }
`;
const Cards = styled.div`
  display: flex;
  flex-direction: column;
  gap: 9px;
  flex: 1;
  min-height: 0;
  padding: 9px 8px 0;
  overflow: hidden;
`;
const Card = styled.article`
  flex: none;
  border-radius: 4px;
  overflow: hidden;
  background: #fff;
`;
const CardHead = styled.button`
  display: flex;
  align-items: center;
  justify-content: space-between;
  width: 100%;
  height: 22px;
  padding: 2px 6px 0;
  background: #1f2230;
  color: #fff;
  font: 700 10px/20px Roboto, sans-serif;
`;
const Leg = styled.div<{ $end?: boolean }>`
  display: grid;
  grid-template-columns: 10px 1fr auto;
  column-gap: 5px;
  align-items: center;
  height: ${(p) => (p.$end ? 19 : 23)}px;
  padding: ${(p) => (p.$end ? 0 : 7)}px 7px 0 8px;
  font-weight: 500;
`;
const Stretch = styled.div`
  display: grid;
  grid-template-columns: 10px 1fr;
  column-gap: 5px;
  padding: 0 7px 0 8px;
`;
const Dashes = styled.span`
  width: 3px;
  margin: 3px 0 2px 3px;
  background: repeating-linear-gradient(#66c9a3 0 8px, #fff 8px 11px);
`;
const Fact = styled.div`
  display: flex;
  justify-content: space-between;
  color: #858793;
`;
const State = styled.div`
  height: 21px;
  padding-left: 7px;
  background: #80828f;
  color: #fff;
  font: 700 10px/20px Roboto, sans-serif;
`;
const SoftKeys = styled.nav`
  display: flex;
  align-items: center;
  justify-content: center;
  gap: 38px;
  flex: none;
  height: 24px;
  background: #000;
  button { display: flex; }
`;

const Pin = ({ solid }: { solid?: boolean }) => (
  <svg width="10" height="12" viewBox="0 0 20 24" fill={solid ? "#1f2230" : "none"} stroke="#1f2230" strokeWidth="2">
    <path d="M10 22C6 17 2 14 2 9a8 8 0 0 1 16 0c0 5-4 8-8 13z" />
    <circle cx="10" cy="9" r={solid ? 3 : 1} fill={solid ? "#fff" : "#1f2230"} />
  </svg>
);

function Schedule({ id, facts, state }: { id: string; facts: string[]; state: string }) {
  const names = ["Consignments", "Drops", "Total Items", "Depart Weight (kgs)", "Peak Weight (kgs)"];
  return (
    <Card>
      <CardHead>
        Schedule: {id}
        <svg width="6" height="10" viewBox="0 0 6 10" fill="none" stroke="#fff" strokeWidth="1.500"><path d="M1 0l4 5-4 5" /></svg>
      </CardHead>
      <Leg><Pin /><span>Depart: Depot</span><span>10:42 AM</span></Leg>
      <Stretch>
        <Dashes />
        <div>{names.map((n, i) => <Fact key={n}><span>{n}</span><span>{facts[i]}</span></Fact>)}</div>
      </Stretch>
      <Leg $end><Pin solid /><span>Arrive: Depot</span><span>15:52 AM</span></Leg>
      <State>{state}</State>
    </Card>
  );
}

function PhoneWindow() {
  return (
    <Phone>
      <AppBar>
        <button aria-label="Back"><svg width="8" height="8" viewBox="0 0 8 8" fill="none" stroke="#fff"><path d="M8 4H1M4 0L0.500 4 4 8" /></svg></button>
        <h1>Your Schedules</h1>
        <button aria-label="More"><svg width="8" height="9" viewBox="0 0 8 9" fill="#fff"><path d="M3 0h2v2H3zM3 3h2v2H3zM3 6h2v2H3z" /></svg></button>
      </AppBar>
      <Cards>
        <Schedule id="0005475" facts={["77", "3", "119", "46,355", "46,355"]} state="Planned" />
        <Schedule id="0005477" facts={["4", "4", "5", "46,355", "46,355"]} state="Planned" />
      </Cards>
      <SoftKeys>
        <button aria-label="Back key"><svg width="8" height="10" viewBox="0 0 8 10"><path d="M8 0v10L0 5z" fill="#fff" /></svg></button>
        <button aria-label="Home key"><svg width="9" height="9" viewBox="0 0 9 9"><circle cx="4.500" cy="4.500" r="4" fill="#fff" /></svg></button>
        <button aria-label="Recent key"><svg width="9" height="9" viewBox="0 0 9 9"><path d="M0 0h9v9H0z" fill="#fff" /></svg></button>
      </SoftKeys>
    </Phone>
  );
}

export default function App() {
  return (
    <Stage>
      <Global />
      <PlannerWindow />
      <PortalWindow />
      <PhoneWindow />
    </Stage>
  );
}
